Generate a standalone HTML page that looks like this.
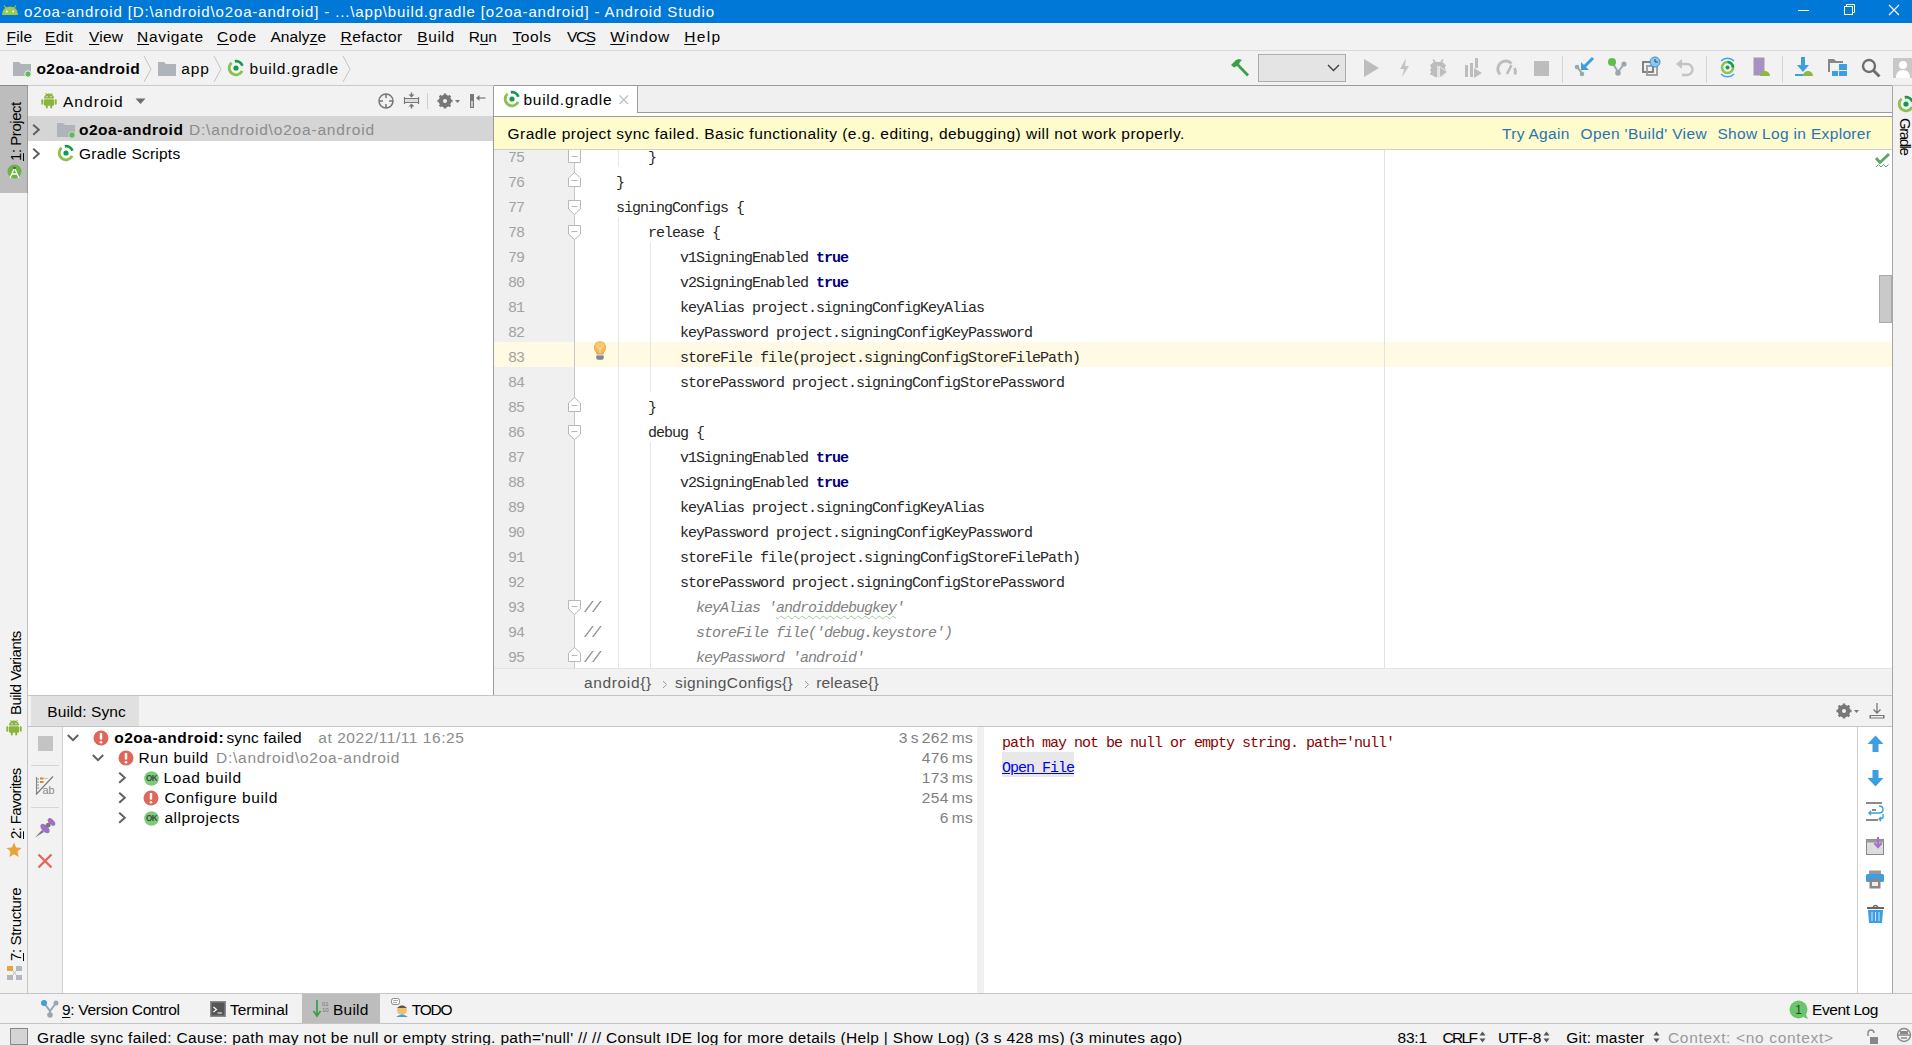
<!DOCTYPE html>
<html><head><meta charset="utf-8">
<style>
*{margin:0;padding:0;box-sizing:border-box}
html,body{width:1912px;height:1045px;overflow:hidden;background:#f2f2f2;font-family:"Liberation Sans",sans-serif;color:#000}
.a{position:absolute}
.t{position:absolute;white-space:pre}
.u{text-decoration:underline;text-decoration-thickness:1px;text-underline-offset:2px}
svg{position:absolute;overflow:visible}
.code b{color:#000080;font-weight:bold}
.code i{color:#808080;font-style:italic}
.sq{text-decoration:underline wavy #a0c8a0;text-decoration-thickness:1px;text-underline-offset:3px}
</style></head><body>
<div class="a" style="left:0px;top:0px;width:1912px;height:23px;background:#0078d7;"></div>
<svg style="left:0;top:0" width="22" height="22"><path d="M2 15 Q2 7 10 6.5 Q18 7 18 15 Z" fill="#9ccb4e"/><path d="M4 5.5 L6 8 M16 5.5 L14 8" stroke="#9ccb4e" stroke-width="1.2"/><circle cx="6.8" cy="11.5" r="0.9" fill="#fff"/><circle cx="13.2" cy="11.5" r="0.9" fill="#fff"/></svg>
<div class="t" style="left:24.00px;top:3.5px;font:15px 'Liberation Sans';line-height:1;color:#fff;letter-spacing:0.857px;">o2oa-android [D:\android\o2oa-android] - ...\app\build.gradle [o2oa-android] - Android Studio</div>
<svg style="left:1790px;top:0" width="122" height="22"><path d="M8 10.5 H19" stroke="#fff" stroke-width="1"/><rect x="54.5" y="6.5" width="8" height="8" fill="none" stroke="#fff"/><path d="M56.5 6.5 V4.5 H64.5 V12.5 H62.5" fill="none" stroke="#fff"/><path d="M99 5 L109 15 M109 5 L99 15" stroke="#fff" stroke-width="1.1"/></svg>
<div class="a" style="left:0px;top:23px;width:1912px;height:27px;background:#f2f2f2;"></div>
<div class="a" style="left:0px;top:50px;width:1912px;height:1px;background:#d9d9d9;"></div>
<div class="t" style="left:6.50px;top:29px;font:15.5px 'Liberation Sans';line-height:1;color:#000;letter-spacing:0.182px;"><span class="u">F</span>ile</div>
<div class="t" style="left:45.00px;top:29px;font:15.5px 'Liberation Sans';line-height:1;color:#000;letter-spacing:0.366px;"><span class="u">E</span>dit</div>
<div class="t" style="left:89.00px;top:29px;font:15.5px 'Liberation Sans';line-height:1;color:#000;letter-spacing:0.193px;"><span class="u">V</span>iew</div>
<div class="t" style="left:137.00px;top:29px;font:15.5px 'Liberation Sans';line-height:1;color:#000;letter-spacing:0.692px;"><span class="u">N</span>avigate</div>
<div class="t" style="left:217.00px;top:29px;font:15.5px 'Liberation Sans';line-height:1;color:#000;letter-spacing:0.689px;"><span class="u">C</span>ode</div>
<div class="t" style="left:270.40px;top:29px;font:15.5px 'Liberation Sans';line-height:1;color:#000;letter-spacing:0.113px;">Analy<span class="u">z</span>e</div>
<div class="t" style="left:340.50px;top:29px;font:15.5px 'Liberation Sans';line-height:1;color:#000;letter-spacing:0.440px;"><span class="u">R</span>efactor</div>
<div class="t" style="left:417.30px;top:29px;font:15.5px 'Liberation Sans';line-height:1;color:#000;letter-spacing:0.564px;"><span class="u">B</span>uild</div>
<div class="t" style="left:468.70px;top:29px;font:15.5px 'Liberation Sans';line-height:1;color:#000;letter-spacing:-0.107px;">R<span class="u">u</span>n</div>
<div class="t" style="left:512.40px;top:29px;font:15.5px 'Liberation Sans';line-height:1;color:#000;letter-spacing:0.616px;"><span class="u">T</span>ools</div>
<div class="t" style="left:567.00px;top:29px;font:15.5px 'Liberation Sans';line-height:1;color:#000;letter-spacing:-1.416px;">VC<span class="u">S</span></div>
<div class="t" style="left:610.30px;top:29px;font:15.5px 'Liberation Sans';line-height:1;color:#000;letter-spacing:0.753px;"><span class="u">W</span>indow</div>
<div class="t" style="left:684.20px;top:29px;font:15.5px 'Liberation Sans';line-height:1;color:#000;letter-spacing:1.347px;"><span class="u">H</span>elp</div>
<div class="a" style="left:0px;top:51px;width:1912px;height:34px;background:#f2f2f2;"></div>
<div class="a" style="left:0px;top:85px;width:1912px;height:1px;background:#c9c9c9;"></div>
<svg style="left:13px;top:62px" width="20" height="16"><path d="M0 0 H6 L8 2 H18 V14 H0 Z" fill="#afb4bb"/><circle cx="15" cy="12" r="3.2" fill="#5fb85a" stroke="#f2f2f2" stroke-width="1"/></svg>
<div class="t" style="left:36.40px;top:61px;font:bold 15.5px 'Liberation Sans';line-height:1;color:#000;letter-spacing:0.464px;">o2oa-android</div>
<svg style="left:143px;top:55.5px" width="10" height="27"><path d="M1 0 L8 13 L1 26" fill="none" stroke="#c4c4c4" stroke-width="1"/></svg>
<svg style="left:158px;top:62px" width="20" height="16"><path d="M0 0 H6 L8 2 H18 V14 H0 Z" fill="#afb4bb"/></svg>
<div class="t" style="left:181.30px;top:61px;font:15.5px 'Liberation Sans';line-height:1;color:#000;letter-spacing:0.880px;">app</div>
<svg style="left:212.5px;top:55.5px" width="10" height="27"><path d="M1 0 L8 13 L1 26" fill="none" stroke="#c4c4c4" stroke-width="1"/></svg>
<svg style="left:227px;top:59px" width="18" height="18" viewBox="0 0 18 18"><path d="M4.63 3.79 A6.8 6.8 0 1 0 15.16 11.87" fill="none" stroke="#8cc152" stroke-width="2.8"/><path d="M7.82 2.3 A6.8 6.8 0 0 1 15.39 6.67" fill="none" stroke="#139b4b" stroke-width="2.8"/><circle cx="9" cy="9" r="2.6" fill="#139b4b"/></svg>
<div class="t" style="left:249.50px;top:61px;font:15.5px 'Liberation Sans';line-height:1;color:#000;letter-spacing:0.780px;">build.gradle</div>
<svg style="left:342px;top:55.5px" width="10" height="27"><path d="M1 0 L8 13 L1 26" fill="none" stroke="#c4c4c4" stroke-width="1"/></svg>
<svg style="left:1230px;top:58px" width="21" height="20"><path d="M1 7 L6 2 L9 1 L12 2 L10 4 L9 6 L19 16.5 L17 18.5 L7 8 L4 9.5 Z" fill="#3aa04a"/></svg>
<div class="a" style="left:1258px;top:54px;width:88px;height:28px;background:#e4e4e4;border:1px solid #adadad"></div>
<svg style="left:1327px;top:64px" width="13" height="8"><path d="M1 1 L6.5 6.5 L12 1" fill="none" stroke="#404040" stroke-width="1.4"/></svg>
<svg style="left:1363px;top:58px" width="17" height="20"><path d="M1 1 L16 10 L1 19 Z" fill="#bdbdbd"/></svg>
<svg style="left:1398px;top:58px" width="13" height="20"><path d="M8 0 L2 11 H6 L4 19 L11 8 H7 Z" fill="#c4c4c4"/></svg>
<svg style="left:1430px;top:58px" width="19" height="20"><path d="M3 1.5 L5 4 M13 1.5 L11 4" stroke="#bdbdbd" stroke-width="1.8"/><path d="M4 4 H12 Q15 5 15 8 V16 Q12 19.5 8 19.5 Q4 19.5 1 16 V8 Q1 5 4 4 Z" fill="#bdbdbd"/><path d="M0 7.5 H2 M0 12 H2 M0 16 H2 M14 7.5 H16 M14 12 H16" stroke="#bdbdbd" stroke-width="1.6"/><path d="M8 8 V20" stroke="#f2f2f2" stroke-width="1.4"/><path d="M9.5 8.5 L17.5 14 L9.5 19.5 Z" fill="#bdbdbd" stroke="#f2f2f2" stroke-width="0.8"/></svg>
<svg style="left:1465px;top:58px" width="18" height="20"><rect x="0" y="7" width="3" height="12" fill="#bdbdbd"/><rect x="5" y="5" width="3" height="14" fill="#bdbdbd"/><rect x="10" y="0" width="3" height="10" fill="#bdbdbd"/><path d="M9 10 L17 15 L9 20 Z" fill="#bdbdbd"/></svg>
<svg style="left:1498px;top:59px" width="19" height="18"><path d="M2 15.5 A7.8 7.8 0 0 1 13.5 4.5" fill="none" stroke="#bdbdbd" stroke-width="3"/><path d="M16.5 9 A7.8 7.8 0 0 1 17 15.5" fill="none" stroke="#bdbdbd" stroke-width="3"/><path d="M9 15 L13.5 6" stroke="#bdbdbd" stroke-width="2.6"/></svg>
<div class="a" style="left:1534px;top:61px;width:15px;height:15px;background:#bdbdbd"></div>
<div class="a" style="left:1562px;top:56px;width:1px;height:27px;background:#d6d6d6;"></div>
<svg style="left:1574px;top:57px" width="20" height="20"><path d="M3 10 L8 16 L8 19" stroke="#9aa7b0" stroke-width="2" fill="none"/><circle cx="3" cy="10" r="2.3" fill="#9aa7b0"/><circle cx="8" cy="17" r="2.3" fill="#9aa7b0"/><path d="M19 1 L9 11" stroke="#3d9ee0" stroke-width="3"/><path d="M7 5 L7 13 L15 13 Z" fill="#3d9ee0"/></svg>
<svg style="left:1607px;top:57px" width="21" height="20"><path d="M5 5 L11 15 L17 7" stroke="#9aa7b0" stroke-width="2" fill="none"/><circle cx="5" cy="5" r="4" fill="#5fbf4a"/><circle cx="17" cy="7" r="2.6" fill="#9aa7b0"/><circle cx="11" cy="16" r="2.8" fill="#9aa7b0"/></svg>
<svg style="left:1642px;top:57px" width="20" height="20"><rect x="1" y="5" width="10" height="10" fill="none" stroke="#777" stroke-width="1.8"/><rect x="5" y="9" width="10" height="9" fill="none" stroke="#999" stroke-width="1.8"/><circle cx="13" cy="5" r="5" fill="#8cc8f0" stroke="#3a8fd0" stroke-width="1"/><path d="M13 2 V5 H16" stroke="#333" stroke-width="0.9" fill="none"/></svg>
<svg style="left:1676px;top:58px" width="19" height="19"><path d="M4 6 H11 A5.5 5.5 0 0 1 11 17 H6" fill="none" stroke="#c4c4c4" stroke-width="2.4"/><path d="M0 6 L6 1 L6 11 Z" fill="#c4c4c4"/></svg>
<div class="a" style="left:1706px;top:56px;width:1px;height:27px;background:#d6d6d6;"></div>
<svg style="left:1718px;top:57px" width="19" height="21"><path d="M3 4 A9 9 0 0 1 16 4 M3 17 A9 9 0 0 0 16 17" fill="none" stroke="#40a8e8" stroke-width="1.5"/><circle cx="9.5" cy="10.5" r="5.5" fill="none" stroke="#8dc255" stroke-width="2.6"/><path d="M9.5 5 A5.5 5.5 0 0 1 15 10.5" fill="none" stroke="#199b4d" stroke-width="2.6"/><circle cx="9.5" cy="10.5" r="2" fill="#199b4d"/></svg>
<svg style="left:1753px;top:57px" width="18" height="20"><rect x="0.5" y="0.5" width="11" height="18" fill="#9e9e9e"/><rect x="2" y="2" width="8" height="15" fill="#a98ecb"/><path d="M7 19 A5 5 0 0 1 17 19 Z" fill="#8ab842"/></svg>
<div class="a" style="left:1782px;top:56px;width:1px;height:27px;background:#d6d6d6;"></div>
<svg style="left:1795px;top:57px" width="18" height="20"><path d="M6 0 H10 V8 H14 L8 15 L2 8 H6 Z" fill="#3d9ee0"/><rect x="0" y="17" width="10" height="2" fill="#3d9ee0"/><path d="M8 19 A5 5 0 0 1 18 19 Z" fill="#8ab842"/></svg>
<svg style="left:1827px;top:58px" width="21" height="19"><path d="M1 1 H7 L9 3 H16 V5 H3 V14 H1 Z" fill="#888"/><rect x="12" y="6" width="8" height="6" fill="#3d9ee0"/><rect x="5" y="13" width="6" height="5" fill="#3d9ee0"/><rect x="12" y="13" width="8" height="5" fill="#3d9ee0"/></svg>
<svg style="left:1861px;top:58px" width="20" height="20"><circle cx="8" cy="8" r="6" fill="none" stroke="#6e6e6e" stroke-width="2.4"/><path d="M12.5 12.5 L18.5 18.5" stroke="#6e6e6e" stroke-width="3"/></svg>
<svg style="left:1893px;top:58px" width="19" height="20"><rect x="0" y="0" width="19" height="20" fill="#c8c8c8"/><circle cx="10" cy="7" r="4" fill="#fff"/><path d="M3 20 Q3 12 10 12 Q17 12 17 20 Z" fill="#fff"/></svg>
<div class="a" style="left:0px;top:86px;width:27px;height:907px;background:#f2f2f2;"></div>
<div class="a" style="left:27px;top:86px;width:1px;height:907px;background:#c4c4c4;"></div>
<div class="a" style="left:0px;top:85px;width:28px;height:1px;background:#8a8a8a;"></div>
<div class="a" style="left:0px;top:86px;width:27px;height:107px;background:#bdbdbd;"></div>
<div class="a" style="left:27px;top:86px;width:1px;height:107px;background:#999;"></div>
<div class="t" style="left:7.50px;top:160.80px;font:15px 'Liberation Sans';line-height:1;color:#000;letter-spacing:-0.455px;transform-origin:0 0;transform:rotate(-90deg);"><span class="u">1</span>: Project</div>
<svg style="left:7px;top:164px" width="15" height="15"><circle cx="7.5" cy="7.5" r="7" fill="#6ab344"/><path d="M3 14 L7.5 4 L12 14 M4.5 10 H10.5" stroke="#fff" stroke-width="1.3" fill="none"/><circle cx="7.5" cy="4" r="1.3" fill="#555"/></svg>
<div class="t" style="left:7.70px;top:715.30px;font:15px 'Liberation Sans';line-height:1;color:#000;letter-spacing:-0.549px;transform-origin:0 0;transform:rotate(-90deg);">Build Variants</div>
<svg style="left:6px;top:719px" width="16" height="17" viewBox="0 0 16 17"><path d="M3 6.5 A5 5 0 0 1 13 6.5 Z" fill="#8cb43c"/><rect x="3" y="7.2" width="10" height="6.5" rx="1" fill="#8cb43c"/><rect x="0.3" y="7.2" width="2" height="5.5" rx="1" fill="#8cb43c"/><rect x="13.7" y="7.2" width="2" height="5.5" rx="1" fill="#8cb43c"/><rect x="4.8" y="12" width="2" height="4.5" rx="1" fill="#8cb43c"/><rect x="9.2" y="12" width="2" height="4.5" rx="1" fill="#8cb43c"/><path d="M4.5 1 L5.8 3 M11.5 1 L10.2 3" stroke="#8cb43c" stroke-width="0.9"/><circle cx="6" cy="4.7" r="0.6" fill="#fff"/><circle cx="10" cy="4.7" r="0.6" fill="#fff"/></svg>
<div class="t" style="left:7.70px;top:838.80px;font:15px 'Liberation Sans';line-height:1;color:#000;letter-spacing:-0.642px;transform-origin:0 0;transform:rotate(-90deg);"><span class="u">2</span>: Favorites</div>
<svg style="left:6px;top:842px" width="16" height="16"><path d="M8 0.5 L10.2 5.5 L15.5 6 L11.5 9.6 L12.7 15 L8 12.2 L3.3 15 L4.5 9.6 L0.5 6 L5.8 5.5 Z" fill="#e8a33a"/></svg>
<div class="t" style="left:7.70px;top:961.00px;font:15px 'Liberation Sans';line-height:1;color:#000;letter-spacing:-0.363px;transform-origin:0 0;transform:rotate(-90deg);"><span class="u">7</span>: Structure</div>
<svg style="left:7px;top:966px" width="15" height="14"><rect x="0" y="0" width="6" height="5" fill="#e8a33a"/><rect x="9" y="0" width="6" height="5" fill="#b0b7bf"/><rect x="0" y="9" width="6" height="5" fill="#b0b7bf"/><rect x="9" y="9" width="6" height="5" fill="#b0b7bf"/><path d="M6 5 L9 9 M9 5 L6 9" stroke="#b0b7bf" stroke-width="0.8"/></svg>
<div class="a" style="left:28px;top:86px;width:465px;height:30px;background:#f2f2f2;"></div>
<div class="a" style="left:28px;top:116px;width:465px;height:580px;background:#fff;"></div>
<div class="a" style="left:28px;top:116px;width:465px;height:25px;background:#d5d5d5;"></div>
<svg style="left:41px;top:92px" width="16" height="17" viewBox="0 0 16 17"><path d="M3 6.5 A5 5 0 0 1 13 6.5 Z" fill="#8cb43c"/><rect x="3" y="7.2" width="10" height="6.5" rx="1" fill="#8cb43c"/><rect x="0.3" y="7.2" width="2" height="5.5" rx="1" fill="#8cb43c"/><rect x="13.7" y="7.2" width="2" height="5.5" rx="1" fill="#8cb43c"/><rect x="4.8" y="12" width="2" height="4.5" rx="1" fill="#8cb43c"/><rect x="9.2" y="12" width="2" height="4.5" rx="1" fill="#8cb43c"/><path d="M4.5 1 L5.8 3 M11.5 1 L10.2 3" stroke="#8cb43c" stroke-width="0.9"/><circle cx="6" cy="4.7" r="0.6" fill="#fff"/><circle cx="10" cy="4.7" r="0.6" fill="#fff"/></svg>
<div class="t" style="left:62.90px;top:94px;font:15.5px 'Liberation Sans';line-height:1;color:#000;letter-spacing:1.066px;">Android</div>
<svg style="left:135px;top:98px" width="11" height="7"><path d="M0.5 0.5 H10.5 L5.5 6 Z" fill="#6e6e6e"/></svg>
<svg style="left:378px;top:93px" width="16" height="16"><circle cx="8" cy="8" r="7" fill="none" stroke="#777" stroke-width="1.5"/><path d="M8 1 V5 M8 11 V15 M1 8 H5 M11 8 H15" stroke="#777" stroke-width="1.5"/></svg>
<svg style="left:404px;top:92px" width="15" height="17"><path d="M0.5 6.5 H14.5 M0.5 10.5 H14.5 M0.5 5 V12 M14.5 5 V12" stroke="#777" stroke-width="1.2"/><rect x="1" y="7" width="13" height="3" fill="#ddd"/><path d="M7.5 0.5 V3 M7.5 14 V16.5" stroke="#777" stroke-width="1.4"/><path d="M4.5 2.5 H10.5 L7.5 5.5 Z M4.5 14.5 H10.5 L7.5 11.5 Z" fill="#777"/></svg>
<div class="a" style="left:427px;top:93px;width:1px;height:16px;background:#d0d0d0;"></div>
<svg style="left:437px;top:93px" width="24" height="16"><g transform="translate(8 8)"><circle r="4.8" fill="none" stroke="#777" stroke-width="3"/><path d="M0 -7.5 V7.5 M-7.5 0 H7.5 M-5.3 -5.3 L5.3 5.3 M-5.3 5.3 L5.3 -5.3" stroke="#777" stroke-width="2.6"/><circle r="2" fill="#f2f2f2"/></g><path d="M18 7 H23 L20.5 10 Z" fill="#777"/></svg>
<svg style="left:469px;top:93px" width="17" height="16"><rect x="1" y="1" width="4" height="14" fill="#777"/><rect x="2.3" y="8" width="1.4" height="6" fill="#eee"/><path d="M8 5 H16.5" stroke="#777" stroke-width="1.2"/><path d="M7 5 L10.5 2 V8 Z" fill="#777"/></svg>
<svg style="left:32px;top:124px" width="9" height="12"><path d="M1.2 0.8 L6.8 5.8 L1.2 10.8" fill="none" stroke="#606060" stroke-width="2"/></svg>
<svg style="left:57px;top:123px" width="20" height="16"><path d="M0 0 H6 L8 2 H18 V14 H0 Z" fill="#afb4bb"/><circle cx="15" cy="12" r="3.2" fill="#5fb85a" stroke="#d5d5d5" stroke-width="1"/></svg>
<div class="t" style="left:79.00px;top:122px;font:bold 15.5px 'Liberation Sans';line-height:1;color:#000;letter-spacing:0.518px;">o2oa-android</div>
<div class="t" style="left:189.00px;top:122px;font:15.5px 'Liberation Sans';line-height:1;color:#8c8c8c;letter-spacing:0.811px;">D:\android\o2oa-android</div>
<svg style="left:32px;top:148px" width="9" height="12"><path d="M1.2 0.8 L6.8 5.8 L1.2 10.8" fill="none" stroke="#606060" stroke-width="2"/></svg>
<svg style="left:57px;top:144px" width="18" height="18" viewBox="0 0 18 18"><path d="M4.63 3.79 A6.8 6.8 0 1 0 15.16 11.87" fill="none" stroke="#8cc152" stroke-width="2.8"/><path d="M7.82 2.3 A6.8 6.8 0 0 1 15.39 6.67" fill="none" stroke="#139b4b" stroke-width="2.8"/><circle cx="9" cy="9" r="2.6" fill="#139b4b"/></svg>
<div class="t" style="left:79.00px;top:146px;font:15.5px 'Liberation Sans';line-height:1;color:#000;letter-spacing:0.227px;">Gradle Scripts</div>
<div class="a" style="left:493px;top:86px;width:1px;height:610px;background:#9b9b9b;"></div>
<div class="a" style="left:494px;top:85px;width:1398px;height:1px;background:#9b9b9b;"></div>
<div class="a" style="left:494px;top:86px;width:1398px;height:30px;background:#fff;"></div>
<div class="a" style="left:637px;top:86px;width:1255px;height:27px;background:#f0f0f0;"></div>
<div class="a" style="left:637px;top:86px;width:1px;height:27px;background:#9b9b9b;"></div>
<div class="a" style="left:637px;top:112px;width:1255px;height:1px;background:#9b9b9b;"></div>
<svg style="left:503px;top:90px" width="18" height="18" viewBox="0 0 18 18"><path d="M4.63 3.79 A6.8 6.8 0 1 0 15.16 11.87" fill="none" stroke="#8cc152" stroke-width="2.8"/><path d="M7.82 2.3 A6.8 6.8 0 0 1 15.39 6.67" fill="none" stroke="#139b4b" stroke-width="2.8"/><circle cx="9" cy="9" r="2.6" fill="#139b4b"/></svg>
<div class="t" style="left:523.50px;top:92px;font:15.5px 'Liberation Sans';line-height:1;color:#000;letter-spacing:0.725px;">build.gradle</div>
<svg style="left:619px;top:95px" width="10" height="10"><path d="M0.5 0.5 L9 9 M9 0.5 L0.5 9" stroke="#b8bfc4" stroke-width="1.2"/></svg>
<div class="a" style="left:494px;top:116px;width:1398px;height:1px;background:#9b9b9b;"></div>
<div class="a" style="left:494px;top:117px;width:1398px;height:32px;background:#fefbcd;"></div>
<div class="a" style="left:494px;top:149px;width:1398px;height:1px;background:#cfcfcf;"></div>
<div class="t" style="left:507.50px;top:126px;font:15.5px 'Liberation Sans';line-height:1;color:#000;letter-spacing:0.475px;">Gradle project sync failed. Basic functionality (e.g. editing, debugging) will not work properly.</div>
<div class="t" style="left:1502.00px;top:125.5px;font:15.5px 'Liberation Sans';line-height:1;color:#2a73b4;letter-spacing:0.296px;">Try Again</div>
<div class="t" style="left:1580.50px;top:125.5px;font:15.5px 'Liberation Sans';line-height:1;color:#2a73b4;letter-spacing:0.366px;">Open 'Build' View</div>
<div class="t" style="left:1717.40px;top:125.5px;font:15.5px 'Liberation Sans';line-height:1;color:#2a73b4;letter-spacing:0.328px;">Show Log in Explorer</div>
<div class="a" style="left:494px;top:150px;width:1398px;height:518px;background:#fff;"></div>
<div class="a" style="left:494px;top:150px;width:80px;height:518px;background:#f0f0f0;"></div>
<div class="a" style="left:494px;top:342px;width:1398px;height:25px;background:#fffae3;"></div>
<div class="a" style="left:1384px;top:150px;width:1px;height:518px;background:#e2e2e2;"></div>
<div class="a" style="left:574px;top:150px;width:1px;height:518px;background:#c8c8c8;"></div>
<div class="a" style="left:618px;top:150px;width:1px;height:17px;background:#e6e6e6;"></div>
<div class="a" style="left:618px;top:217px;width:1px;height:451px;background:#e6e6e6;"></div>
<div class="a" style="left:650px;top:242px;width:1px;height:150px;background:#e6e6e6;"></div>
<div class="a" style="left:650px;top:442px;width:1px;height:226px;background:#e6e6e6;"></div>
<svg style="left:568px;top:172px" width="13" height="15"><path d="M0.5 14.5 H12.5 V6 L6.5 0.5 L0.5 6 Z" fill="#fff" stroke="#b8b8b8" stroke-width="1"/><path d="M3.5 8.5 H9.5" stroke="#b8b8b8" stroke-width="1"/></svg>
<svg style="left:568px;top:200px" width="13" height="15"><path d="M0.5 0.5 H12.5 V9 L6.5 14.5 L0.5 9 Z" fill="#fff" stroke="#b8b8b8" stroke-width="1"/><path d="M3.5 6.5 H9.5" stroke="#b8b8b8" stroke-width="1"/></svg>
<svg style="left:568px;top:225px" width="13" height="15"><path d="M0.5 0.5 H12.5 V9 L6.5 14.5 L0.5 9 Z" fill="#fff" stroke="#b8b8b8" stroke-width="1"/><path d="M3.5 6.5 H9.5" stroke="#b8b8b8" stroke-width="1"/></svg>
<svg style="left:568px;top:397px" width="13" height="15"><path d="M0.5 14.5 H12.5 V6 L6.5 0.5 L0.5 6 Z" fill="#fff" stroke="#b8b8b8" stroke-width="1"/><path d="M3.5 8.5 H9.5" stroke="#b8b8b8" stroke-width="1"/></svg>
<svg style="left:568px;top:425px" width="13" height="15"><path d="M0.5 0.5 H12.5 V9 L6.5 14.5 L0.5 9 Z" fill="#fff" stroke="#b8b8b8" stroke-width="1"/><path d="M3.5 6.5 H9.5" stroke="#b8b8b8" stroke-width="1"/></svg>
<svg style="left:568px;top:600px" width="13" height="15"><path d="M0.5 0.5 H12.5 V9 L6.5 14.5 L0.5 9 Z" fill="#fff" stroke="#b8b8b8" stroke-width="1"/><path d="M3.5 6.5 H9.5" stroke="#b8b8b8" stroke-width="1"/></svg>
<svg style="left:568px;top:647px" width="13" height="15"><path d="M0.5 14.5 H12.5 V6 L6.5 0.5 L0.5 6 Z" fill="#fff" stroke="#b8b8b8" stroke-width="1"/><path d="M3.5 8.5 H9.5" stroke="#b8b8b8" stroke-width="1"/></svg>
<div class="a" style="left:568px;top:150px;width:13px;height:13px;overflow:hidden"><svg style="left:0;top:0px" width="13" height="15"><path d="M0.5 12.5 H12.5 V-2 L0.5 -2 Z" fill="#fff" stroke="#b8b8b8"/><path d="M3.5 6.5 H9.5" stroke="#b8b8b8"/></svg></div>
<svg style="left:593px;top:341px" width="14" height="20"><defs><linearGradient id="bg1" x1="0" y1="0" x2="0" y2="1"><stop offset="0" stop-color="#f8d070"/><stop offset="1" stop-color="#f3ae52"/></linearGradient></defs><path d="M7 0.8 Q12.6 0.8 12.6 6.5 Q12.6 9.5 10.5 11.5 V12.8 H3.5 V11.5 Q1.4 9.5 1.4 6.5 Q1.4 0.8 7 0.8 Z" fill="url(#bg1)" stroke="#e8923a" stroke-width="0.7"/><path d="M4 4.5 L7 8.5 L10 4.5 M7 8.5 V12" stroke="#fde9a8" stroke-width="1" fill="none"/><rect x="4" y="13" width="6" height="1.6" fill="#c9cfcf"/><path d="M3.3 14.5 H10.7 V17 Q10.7 18.8 9 18.8 H5 Q3.3 18.8 3.3 17 Z" fill="#858585"/></svg>
<svg style="left:1875px;top:153px" width="15" height="15"><path d="M1 5 L5 9.5 L14 1" fill="none" stroke="#59a869" stroke-width="2.8"/><path d="M1 14 L3.5 11.5 L6 14 L8.5 11.5 L11 14 L13.5 11.5" fill="none" stroke="#59a869" stroke-width="1"/></svg>
<div class="a" style="left:1879px;top:275px;width:13px;height:48px;background:#c9c9c9;border:1px solid #a9a9a9"></div>
<div class="a" style="left:0;top:150px;width:1912px;height:518px;overflow:hidden">
<div class="t" style="left:500px;top:1px;font:15px 'Liberation Mono';line-height:1;letter-spacing:-1px;color:#a3a3a3;width:24px;text-align:right">75</div>
<div class="t code" style="left:584px;top:1px;font:15px 'Liberation Mono';line-height:1;letter-spacing:-1px;color:#262626">        }</div>
<div class="t" style="left:500px;top:26px;font:15px 'Liberation Mono';line-height:1;letter-spacing:-1px;color:#a3a3a3;width:24px;text-align:right">76</div>
<div class="t code" style="left:584px;top:26px;font:15px 'Liberation Mono';line-height:1;letter-spacing:-1px;color:#262626">    }</div>
<div class="t" style="left:500px;top:51px;font:15px 'Liberation Mono';line-height:1;letter-spacing:-1px;color:#a3a3a3;width:24px;text-align:right">77</div>
<div class="t code" style="left:584px;top:51px;font:15px 'Liberation Mono';line-height:1;letter-spacing:-1px;color:#262626">    signingConfigs {</div>
<div class="t" style="left:500px;top:76px;font:15px 'Liberation Mono';line-height:1;letter-spacing:-1px;color:#a3a3a3;width:24px;text-align:right">78</div>
<div class="t code" style="left:584px;top:76px;font:15px 'Liberation Mono';line-height:1;letter-spacing:-1px;color:#262626">        release {</div>
<div class="t" style="left:500px;top:101px;font:15px 'Liberation Mono';line-height:1;letter-spacing:-1px;color:#a3a3a3;width:24px;text-align:right">79</div>
<div class="t code" style="left:584px;top:101px;font:15px 'Liberation Mono';line-height:1;letter-spacing:-1px;color:#262626">            v1SigningEnabled <b>true</b></div>
<div class="t" style="left:500px;top:126px;font:15px 'Liberation Mono';line-height:1;letter-spacing:-1px;color:#a3a3a3;width:24px;text-align:right">80</div>
<div class="t code" style="left:584px;top:126px;font:15px 'Liberation Mono';line-height:1;letter-spacing:-1px;color:#262626">            v2SigningEnabled <b>true</b></div>
<div class="t" style="left:500px;top:151px;font:15px 'Liberation Mono';line-height:1;letter-spacing:-1px;color:#a3a3a3;width:24px;text-align:right">81</div>
<div class="t code" style="left:584px;top:151px;font:15px 'Liberation Mono';line-height:1;letter-spacing:-1px;color:#262626">            keyAlias project.signingConfigKeyAlias</div>
<div class="t" style="left:500px;top:176px;font:15px 'Liberation Mono';line-height:1;letter-spacing:-1px;color:#a3a3a3;width:24px;text-align:right">82</div>
<div class="t code" style="left:584px;top:176px;font:15px 'Liberation Mono';line-height:1;letter-spacing:-1px;color:#262626">            keyPassword project.signingConfigKeyPassword</div>
<div class="t" style="left:500px;top:201px;font:15px 'Liberation Mono';line-height:1;letter-spacing:-1px;color:#a3a3a3;width:24px;text-align:right">83</div>
<div class="t code" style="left:584px;top:201px;font:15px 'Liberation Mono';line-height:1;letter-spacing:-1px;color:#262626">            storeFile file(project.signingConfigStoreFilePath)</div>
<div class="t" style="left:500px;top:226px;font:15px 'Liberation Mono';line-height:1;letter-spacing:-1px;color:#a3a3a3;width:24px;text-align:right">84</div>
<div class="t code" style="left:584px;top:226px;font:15px 'Liberation Mono';line-height:1;letter-spacing:-1px;color:#262626">            storePassword project.signingConfigStorePassword</div>
<div class="t" style="left:500px;top:251px;font:15px 'Liberation Mono';line-height:1;letter-spacing:-1px;color:#a3a3a3;width:24px;text-align:right">85</div>
<div class="t code" style="left:584px;top:251px;font:15px 'Liberation Mono';line-height:1;letter-spacing:-1px;color:#262626">        }</div>
<div class="t" style="left:500px;top:276px;font:15px 'Liberation Mono';line-height:1;letter-spacing:-1px;color:#a3a3a3;width:24px;text-align:right">86</div>
<div class="t code" style="left:584px;top:276px;font:15px 'Liberation Mono';line-height:1;letter-spacing:-1px;color:#262626">        debug {</div>
<div class="t" style="left:500px;top:301px;font:15px 'Liberation Mono';line-height:1;letter-spacing:-1px;color:#a3a3a3;width:24px;text-align:right">87</div>
<div class="t code" style="left:584px;top:301px;font:15px 'Liberation Mono';line-height:1;letter-spacing:-1px;color:#262626">            v1SigningEnabled <b>true</b></div>
<div class="t" style="left:500px;top:326px;font:15px 'Liberation Mono';line-height:1;letter-spacing:-1px;color:#a3a3a3;width:24px;text-align:right">88</div>
<div class="t code" style="left:584px;top:326px;font:15px 'Liberation Mono';line-height:1;letter-spacing:-1px;color:#262626">            v2SigningEnabled <b>true</b></div>
<div class="t" style="left:500px;top:351px;font:15px 'Liberation Mono';line-height:1;letter-spacing:-1px;color:#a3a3a3;width:24px;text-align:right">89</div>
<div class="t code" style="left:584px;top:351px;font:15px 'Liberation Mono';line-height:1;letter-spacing:-1px;color:#262626">            keyAlias project.signingConfigKeyAlias</div>
<div class="t" style="left:500px;top:376px;font:15px 'Liberation Mono';line-height:1;letter-spacing:-1px;color:#a3a3a3;width:24px;text-align:right">90</div>
<div class="t code" style="left:584px;top:376px;font:15px 'Liberation Mono';line-height:1;letter-spacing:-1px;color:#262626">            keyPassword project.signingConfigKeyPassword</div>
<div class="t" style="left:500px;top:401px;font:15px 'Liberation Mono';line-height:1;letter-spacing:-1px;color:#a3a3a3;width:24px;text-align:right">91</div>
<div class="t code" style="left:584px;top:401px;font:15px 'Liberation Mono';line-height:1;letter-spacing:-1px;color:#262626">            storeFile file(project.signingConfigStoreFilePath)</div>
<div class="t" style="left:500px;top:426px;font:15px 'Liberation Mono';line-height:1;letter-spacing:-1px;color:#a3a3a3;width:24px;text-align:right">92</div>
<div class="t code" style="left:584px;top:426px;font:15px 'Liberation Mono';line-height:1;letter-spacing:-1px;color:#262626">            storePassword project.signingConfigStorePassword</div>
<div class="t" style="left:500px;top:451px;font:15px 'Liberation Mono';line-height:1;letter-spacing:-1px;color:#a3a3a3;width:24px;text-align:right">93</div>
<div class="t code" style="left:584px;top:451px;font:15px 'Liberation Mono';line-height:1;letter-spacing:-1px;color:#262626"><i>//            keyAlias '<span class="sq">androiddebugkey</span>'</i></div>
<div class="t" style="left:500px;top:476px;font:15px 'Liberation Mono';line-height:1;letter-spacing:-1px;color:#a3a3a3;width:24px;text-align:right">94</div>
<div class="t code" style="left:584px;top:476px;font:15px 'Liberation Mono';line-height:1;letter-spacing:-1px;color:#262626"><i>//            storeFile file('debug.keystore')</i></div>
<div class="t" style="left:500px;top:501px;font:15px 'Liberation Mono';line-height:1;letter-spacing:-1px;color:#a3a3a3;width:24px;text-align:right">95</div>
<div class="t code" style="left:584px;top:501px;font:15px 'Liberation Mono';line-height:1;letter-spacing:-1px;color:#262626"><i>//            keyPassword 'android'</i></div>
</div>
<div class="a" style="left:494px;top:668px;width:1398px;height:28px;background:#f2f2f2;"></div>
<div class="a" style="left:494px;top:668px;width:1398px;height:1px;background:#e4e4e4;"></div>
<div class="t" style="left:584.00px;top:675px;font:15.5px 'Liberation Sans';line-height:1;color:#555;letter-spacing:0.640px;">android{}</div>
<svg style="left:662px;top:680px" width="6" height="9"><path d="M1 1 L4.5 4.5 L1 8" fill="none" stroke="#999" stroke-width="1"/></svg>
<div class="t" style="left:675.00px;top:675px;font:15.5px 'Liberation Sans';line-height:1;color:#555;letter-spacing:0.383px;">signingConfigs{}</div>
<svg style="left:804px;top:680px" width="6" height="9"><path d="M1 1 L4.5 4.5 L1 8" fill="none" stroke="#999" stroke-width="1"/></svg>
<div class="t" style="left:816.30px;top:675px;font:15.5px 'Liberation Sans';line-height:1;color:#555;letter-spacing:0.136px;">release{}</div>
<div class="a" style="left:1892px;top:86px;width:1px;height:907px;background:#a6a6a6;"></div>
<div class="a" style="left:1893px;top:86px;width:19px;height:907px;background:#f2f2f2;"></div>
<div class="a" style="left:1893px;top:90px;width:19px;height:26px;overflow:hidden"><svg style="left:4px;top:5px" width="18" height="18" viewBox="0 0 18 18"><path d="M4.63 3.79 A6.8 6.8 0 1 0 15.16 11.87" fill="none" stroke="#8cc152" stroke-width="2.8"/><path d="M7.82 2.3 A6.8 6.8 0 0 1 15.39 6.67" fill="none" stroke="#139b4b" stroke-width="2.8"/><circle cx="9" cy="9" r="2.6" fill="#139b4b"/></svg></div>
<div class="t" style="left:1912.50px;top:118.30px;font:15px 'Liberation Sans';line-height:1;color:#000;letter-spacing:-1.436px;transform-origin:0 0;transform:rotate(90deg);">Gradle</div>
<div class="a" style="left:28px;top:695px;width:1864px;height:1px;background:#c4c4c4;"></div>
<div class="a" style="left:28px;top:696px;width:1864px;height:30px;background:#f2f2f2;"></div>
<div class="a" style="left:31px;top:696px;width:108px;height:30px;background:#e0e0e0;"></div>
<div class="t" style="left:47.30px;top:704px;font:15.5px 'Liberation Sans';line-height:1;color:#000;letter-spacing:0.091px;">Build: Sync</div>
<svg style="left:1836px;top:703px" width="24" height="16"><g transform="translate(8 8)"><circle r="4.8" fill="none" stroke="#777" stroke-width="3"/><path d="M0 -7.5 V7.5 M-7.5 0 H7.5 M-5.3 -5.3 L5.3 5.3 M-5.3 5.3 L5.3 -5.3" stroke="#777" stroke-width="2.6"/><circle r="2" fill="#f2f2f2"/></g><path d="M18 7 H23 L20.5 10 Z" fill="#777"/></svg>
<svg style="left:1869px;top:703px" width="16" height="16"><path d="M8 0 V10 M4.5 6.5 L8 10 L11.5 6.5" fill="none" stroke="#777" stroke-width="1.3"/><rect x="0.5" y="12" width="15" height="3.5" fill="#777"/><rect x="2" y="13" width="12" height="1.5" fill="#f2f2f2"/></svg>
<div class="a" style="left:28px;top:726px;width:1864px;height:1px;background:#c4c4c4;"></div>
<div class="a" style="left:28px;top:727px;width:1864px;height:266px;background:#fff;"></div>
<div class="a" style="left:28px;top:727px;width:34px;height:266px;background:#f2f2f2;"></div>
<div class="a" style="left:62px;top:727px;width:1px;height:266px;background:#d0d0d0;"></div>
<div class="a" style="left:38px;top:736px;width:15px;height:15px;background:#c4c4c4;"></div>
<div class="a" style="left:31px;top:765px;width:28px;height:1px;background:#d6d6d6;"></div>
<svg style="left:35px;top:776px" width="20" height="20"><path d="M1.5 1 V18 M1.5 3 H4 M1.5 6 H4 M1.5 9 H4 M1.5 12 H4" stroke="#888" stroke-width="1.1"/><rect x="5" y="1.5" width="3.5" height="2" fill="#d08a2a"/><rect x="5" y="5" width="3.5" height="2" fill="#d08a2a"/><path d="M9.5 2.5 H13" stroke="#999" stroke-dasharray="1 1" stroke-width="1"/><path d="M18 0.5 L1 18.5" stroke="#777" stroke-width="1.1"/><text x="7.5" y="18" font-family="Liberation Sans" font-size="11" fill="#888">ab</text></svg>
<div class="a" style="left:31px;top:807px;width:28px;height:1px;background:#d6d6d6;"></div>
<svg style="left:34px;top:817px" width="22" height="22"><path d="M1 20.5 L8 13 L10 15 Z" fill="#7a7a7a"/><ellipse cx="11" cy="11.5" rx="5.8" ry="3.2" transform="rotate(45 11 11.5)" fill="#a070c8"/><ellipse cx="17.5" cy="5" rx="4.6" ry="2.6" transform="rotate(45 17.5 5)" fill="#a070c8"/><circle cx="14.2" cy="8.2" r="2.4" fill="#777"/></svg>
<svg style="left:37px;top:853px" width="16" height="16"><path d="M1.5 1.5 L14.5 14.5 M14.5 1.5 L1.5 14.5" stroke="#e0695a" stroke-width="2.4"/></svg>
<svg style="left:67px;top:734px" width="12" height="8"><path d="M0.8 1 L6 6.2 L11.2 1" fill="none" stroke="#606060" stroke-width="2"/></svg>
<svg style="left:93px;top:730px" width="16" height="16"><circle cx="8" cy="8" r="7.5" fill="#e0665c"/><rect x="6.8" y="3" width="2.4" height="6.5" rx="0.5" fill="#fff"/><circle cx="8" cy="12.2" r="1.3" fill="#fff"/></svg>
<div class="t" style="left:114.20px;top:730px;font:bold 15.5px 'Liberation Sans';line-height:1;color:#000;letter-spacing:0.511px;">o2oa-android:</div>
<div class="t" style="left:226.40px;top:730px;font:15.5px 'Liberation Sans';line-height:1;color:#000;letter-spacing:0.199px;">sync failed</div>
<div class="t" style="left:318.30px;top:730px;font:15.5px 'Liberation Sans';line-height:1;color:#8c8c8c;letter-spacing:0.551px;">at 2022/11/11 16:25</div>
<svg style="left:92px;top:754px" width="12" height="8"><path d="M0.8 1 L6 6.2 L11.2 1" fill="none" stroke="#606060" stroke-width="2"/></svg>
<svg style="left:118px;top:750px" width="16" height="16"><circle cx="8" cy="8" r="7.5" fill="#e0665c"/><rect x="6.8" y="3" width="2.4" height="6.5" rx="0.5" fill="#fff"/><circle cx="8" cy="12.2" r="1.3" fill="#fff"/></svg>
<div class="t" style="left:138.60px;top:750px;font:15.5px 'Liberation Sans';line-height:1;color:#000;letter-spacing:0.516px;">Run build</div>
<div class="t" style="left:216.00px;top:750px;font:15.5px 'Liberation Sans';line-height:1;color:#8c8c8c;letter-spacing:0.739px;">D:\android\o2oa-android</div>
<svg style="left:118px;top:772px" width="9" height="12"><path d="M1.2 0.8 L6.8 5.8 L1.2 10.8" fill="none" stroke="#606060" stroke-width="2"/></svg>
<svg style="left:144px;top:771px" width="15" height="15"><circle cx="7.5" cy="7.5" r="7.3" fill="#79cd79"/><text x="7.6" y="10.4" text-anchor="middle" font-family="Liberation Sans" font-weight="bold" font-size="8.2" letter-spacing="-0.6" fill="#454545">OK</text></svg>
<div class="t" style="left:163.40px;top:770px;font:15.5px 'Liberation Sans';line-height:1;color:#000;letter-spacing:0.687px;">Load build</div>
<svg style="left:118px;top:792px" width="9" height="12"><path d="M1.2 0.8 L6.8 5.8 L1.2 10.8" fill="none" stroke="#606060" stroke-width="2"/></svg>
<svg style="left:143px;top:790px" width="16" height="16"><circle cx="8" cy="8" r="7.5" fill="#e0665c"/><rect x="6.8" y="3" width="2.4" height="6.5" rx="0.5" fill="#fff"/><circle cx="8" cy="12.2" r="1.3" fill="#fff"/></svg>
<div class="t" style="left:164.40px;top:790px;font:15.5px 'Liberation Sans';line-height:1;color:#000;letter-spacing:0.618px;">Configure build</div>
<svg style="left:118px;top:812px" width="9" height="12"><path d="M1.2 0.8 L6.8 5.8 L1.2 10.8" fill="none" stroke="#606060" stroke-width="2"/></svg>
<svg style="left:144px;top:811px" width="15" height="15"><circle cx="7.5" cy="7.5" r="7.3" fill="#79cd79"/><text x="7.6" y="10.4" text-anchor="middle" font-family="Liberation Sans" font-weight="bold" font-size="8.2" letter-spacing="-0.6" fill="#454545">OK</text></svg>
<div class="t" style="left:164.40px;top:810px;font:15.5px 'Liberation Sans';line-height:1;color:#000;letter-spacing:0.537px;">allprojects</div>
<div class="t" style="right:939px;top:730px;font:15.5px 'Liberation Sans';line-height:1;color:#808080;letter-spacing:0.3px;word-spacing:-1.5px">3 s 262 ms</div>
<div class="t" style="right:939px;top:750px;font:15.5px 'Liberation Sans';line-height:1;color:#808080;letter-spacing:0.3px;word-spacing:-1.5px">476 ms</div>
<div class="t" style="right:939px;top:770px;font:15.5px 'Liberation Sans';line-height:1;color:#808080;letter-spacing:0.3px;word-spacing:-1.5px">173 ms</div>
<div class="t" style="right:939px;top:790px;font:15.5px 'Liberation Sans';line-height:1;color:#808080;letter-spacing:0.3px;word-spacing:-1.5px">254 ms</div>
<div class="t" style="right:939px;top:810px;font:15.5px 'Liberation Sans';line-height:1;color:#808080;letter-spacing:0.3px;word-spacing:-1.5px">6 ms</div>
<div class="a" style="left:977px;top:727px;width:7px;height:266px;background:#f0f0f0;"></div>
<div class="t" style="left:1002px;top:736px;font:15px 'Liberation Mono';line-height:1;letter-spacing:-1px;color:#8b0000">path may not be null or empty string. path='null'</div>
<div class="a" style="left:1002px;top:752px;width:72px;height:25px;background:#e8e8e8;"></div>
<div class="t" style="left:1002px;top:761px;font:15px 'Liberation Mono';line-height:1;letter-spacing:-1px;color:#0000ee;text-decoration:underline;text-underline-offset:1px">Open File</div>
<div class="a" style="left:1857px;top:727px;width:1px;height:266px;background:#d0d0d0;"></div>
<svg style="left:1867px;top:735px" width="17" height="18"><path d="M8.5 0.5 L16.5 9 H11.5 V17 H5.5 V9 H0.5 Z" fill="#3d9ee0"/></svg>
<svg style="left:1867px;top:769px" width="17" height="18"><path d="M8.5 17.5 L16.5 9 H11.5 V1 H5.5 V9 H0.5 Z" fill="#3d9ee0"/></svg>
<svg style="left:1866px;top:802px" width="19" height="20"><path d="M0 1 H16 M0 18 H12 M6 8 H10" stroke="#666" stroke-width="1.3"/><path d="M13 4 Q17 4 17 7.5 Q17 11 13 11 H3 M5 9 L3 11 L5 13 M17 12 V15 Q17 17 14 17 M15 15 L13 17 L15 19" fill="none" stroke="#3d9ee0" stroke-width="1.4"/></svg>
<svg style="left:1866px;top:837px" width="19" height="18"><rect x="0.5" y="2.5" width="17" height="15" fill="#ddd" stroke="#888"/><rect x="0.5" y="2.5" width="17" height="3" fill="#999"/><path d="M12 0 V9 M8.5 6 L12 10 L15.5 6" fill="none" stroke="#a86fd0" stroke-width="2.2"/></svg>
<svg style="left:1866px;top:870px" width="19" height="19"><rect x="3" y="0.5" width="12" height="4" fill="#999"/><rect x="0" y="4" width="18" height="8" rx="1.5" fill="#3d9ee0"/><rect x="3.5" y="9" width="11" height="9.5" fill="#888"/><rect x="6" y="12" width="6" height="4" fill="#eee"/></svg>
<svg style="left:1866px;top:904px" width="19" height="20"><path d="M1 4 H18" stroke="#666" stroke-width="2"/><path d="M7 3 Q9.5 0 12 3" fill="none" stroke="#666" stroke-width="1.3"/><path d="M2 6 H17 L16 19 H3 Z" fill="#3d9ee0"/><path d="M6 8 V17 M9.5 8 V17 M13 8 V17" stroke="#cfe7f8" stroke-width="1"/></svg>
<div class="a" style="left:0px;top:993px;width:1912px;height:1px;background:#c4c4c4;"></div>
<div class="a" style="left:0px;top:994px;width:1912px;height:29px;background:#f2f2f2;"></div>
<div class="a" style="left:302px;top:994px;width:78px;height:29px;background:#bdbdbd;"></div>
<svg style="left:41px;top:999px" width="18" height="20"><path d="M3 4 L9 12 L15 4 M9 12 V17" stroke="#9aa7b0" stroke-width="2" fill="none"/><circle cx="3" cy="4" r="3" fill="#3d9ee0"/><circle cx="15" cy="4" r="2.5" fill="#9aa7b0"/><circle cx="9" cy="16" r="2.8" fill="#9aa7b0"/></svg>
<div class="t" style="left:62.00px;top:1002px;font:15.5px 'Liberation Sans';line-height:1;color:#000;letter-spacing:-0.310px;"><span class="u">9</span>: Version Control</div>
<svg style="left:210px;top:1001px" width="17" height="16"><rect x="0" y="0" width="16" height="16" fill="#8a8a8a"/><rect x="1.5" y="1.5" width="13" height="13" fill="#555"/><path d="M3.5 6 L6.5 8.5 L3.5 11 M7.5 12 H12" stroke="#fff" stroke-width="1.2" fill="none"/></svg>
<div class="t" style="left:230.00px;top:1002px;font:15.5px 'Liberation Sans';line-height:1;color:#000;letter-spacing:-0.061px;">Terminal</div>
<svg style="left:313px;top:999px" width="18" height="20"><path d="M4 1 V16 M0.5 12 L4 17 L7.5 12" stroke="#3aa04a" stroke-width="1.8" fill="none"/><text x="9" y="7" font-family="Liberation Sans" font-size="6" fill="#777">01</text><text x="9" y="13" font-family="Liberation Sans" font-size="6" fill="#777">10</text></svg>
<div class="t" style="left:333.00px;top:1002px;font:15.5px 'Liberation Sans';line-height:1;color:#000;letter-spacing:0.214px;">Build</div>
<svg style="left:391px;top:998px" width="18" height="20"><circle cx="11" cy="12" r="5" fill="#f0c070"/><path d="M5 19 Q11 14 17 19 Z" fill="#3d9ee0"/><path d="M6 10 Q11 5 16 10" fill="#555"/><rect x="0.5" y="0.5" width="8" height="6" rx="2" fill="#fff" stroke="#888"/><path d="M2 2.5 H7 M2 4.5 H6" stroke="#888" stroke-width="0.7"/></svg>
<div class="t" style="left:411.70px;top:1002px;font:15.5px 'Liberation Sans';line-height:1;color:#000;letter-spacing:-1.213px;">TODO</div>
<svg style="left:1789px;top:1000px" width="21" height="20"><circle cx="9.5" cy="9.5" r="9" fill="#6cc46b"/><path d="M12 16 L19 19 L16 12 Z" fill="#6cc46b"/><text x="9.5" y="14" text-anchor="middle" font-family="Liberation Sans" font-size="12" fill="#1f4d1f">1</text></svg>
<div class="t" style="left:1812.00px;top:1002px;font:15.5px 'Liberation Sans';line-height:1;color:#000;letter-spacing:-0.423px;">Event Log</div>
<div class="a" style="left:0px;top:1023px;width:1912px;height:1px;background:#c4c4c4;"></div>
<div class="a" style="left:0px;top:1024px;width:1912px;height:21px;background:#f2f2f2;"></div>
<div class="a" style="left:10px;top:1028px;width:18px;height:17px;background:#d4d4d4;border:1px solid #888"></div>
<div class="t" style="left:37.00px;top:1030px;font:15.5px 'Liberation Sans';line-height:1;color:#000;letter-spacing:0.343px;">Gradle sync failed: Cause: path may not be null or empty string. path='null' // // Consult IDE log for more details (Help | Show Log) (3 s 428 ms) (3 minutes ago)</div>
<div class="t" style="left:1397.60px;top:1030px;font:15.5px 'Liberation Sans';line-height:1;color:#000;letter-spacing:-0.249px;">83:1</div>
<div class="t" style="left:1442.40px;top:1030px;font:15.5px 'Liberation Sans';line-height:1;color:#000;letter-spacing:-1.603px;">CRLF</div>
<svg style="left:1479px;top:1031px" width="7" height="12"><path d="M0.5 4.5 L3.5 0.5 L6.5 4.5 Z M0.5 7.5 L3.5 11.5 L6.5 7.5 Z" fill="#555"/></svg>
<div class="t" style="left:1498.00px;top:1030px;font:15.5px 'Liberation Sans';line-height:1;color:#000;letter-spacing:-0.148px;">UTF-8</div>
<svg style="left:1543px;top:1031px" width="7" height="12"><path d="M0.5 4.5 L3.5 0.5 L6.5 4.5 Z M0.5 7.5 L3.5 11.5 L6.5 7.5 Z" fill="#555"/></svg>
<div class="t" style="left:1566.30px;top:1030px;font:15.5px 'Liberation Sans';line-height:1;color:#000;letter-spacing:0.207px;">Git: master</div>
<svg style="left:1653px;top:1031px" width="7" height="12"><path d="M0.5 4.5 L3.5 0.5 L6.5 4.5 Z M0.5 7.5 L3.5 11.5 L6.5 7.5 Z" fill="#555"/></svg>
<div class="t" style="left:1668.00px;top:1030px;font:15.5px 'Liberation Sans';line-height:1;color:#9a9a9a;letter-spacing:0.670px;">Context: &lt;no context&gt;</div>
<svg style="left:1866px;top:1029px" width="13" height="16"><path d="M2 7 V4 A3 3 0 0 1 8 4" fill="none" stroke="#888" stroke-width="1.4"/><rect x="4" y="8" width="8" height="7" fill="#888"/></svg>
<svg style="left:1896px;top:1027px" width="16" height="18"><circle cx="8" cy="8" r="6.5" fill="none" stroke="#888" stroke-width="1.4"/><path d="M2 8 H14 M5 11 H11" stroke="#888" stroke-width="1.3"/><rect x="4" y="4" width="8" height="3" fill="#888"/></svg>
</body></html>
